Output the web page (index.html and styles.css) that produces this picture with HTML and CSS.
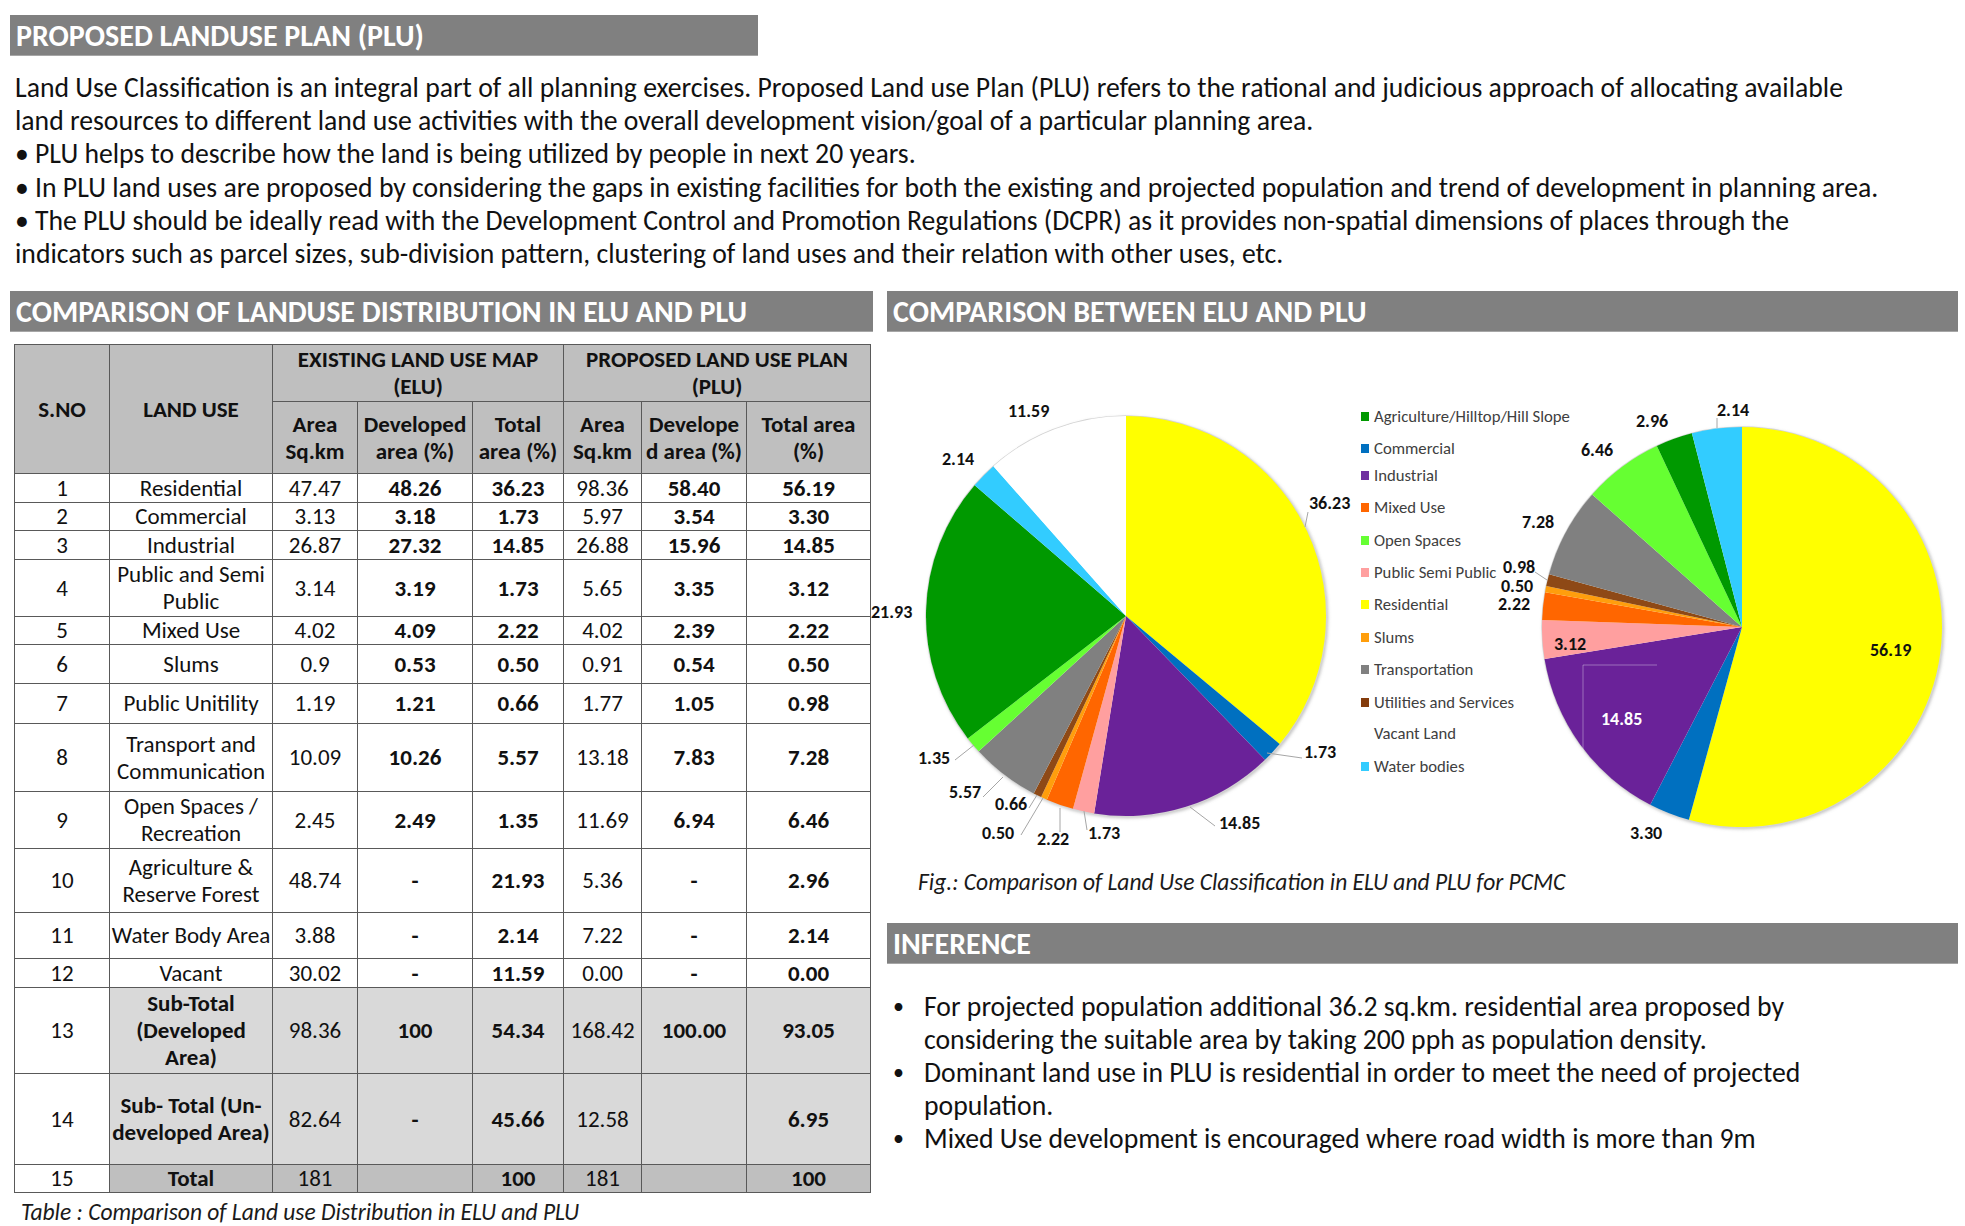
FILE: index.html
```html
<!DOCTYPE html>
<html>
<head>
<meta charset="utf-8">
<title>Proposed Landuse Plan (PLU)</title>
<link rel="stylesheet" href="styles.css">
</head>
<body>
<div class="page">
  <div class="bar bar-top">PROPOSED LANDUSE PLAN (PLU)</div>
  <div class="intro">
    <div class="line">Land Use Classification is an integral part of all planning exercises. Proposed Land use Plan (PLU) refers to the rational and judicious approach of allocating available</div>
    <div class="line">land resources to different land use activities with the overall development vision/goal of a particular planning area.</div>
    <div class="line">• PLU helps to describe how the land is being utilized by people in next 20 years.</div>
    <div class="line">• In PLU land uses are proposed by considering the gaps in existing facilities for both the existing and projected population and trend of development in planning area.</div>
    <div class="line">• The PLU should be ideally read with the Development Control and Promotion Regulations (DCPR) as it provides non-spatial dimensions of places through the</div>
    <div class="line">indicators such as parcel sizes, sub-division pattern, clustering of land uses and their relation with other uses, etc.</div>
  </div>

  <div class="cols">
    <div class="col-left">
      <div class="bar">COMPARISON OF LANDUSE DISTRIBUTION IN ELU AND PLU</div>
      <table class="lu-table">
        <colgroup>
          <col class="c1"><col class="c2"><col class="c3"><col class="c4"><col class="c5"><col class="c6"><col class="c7"><col class="c8">
        </colgroup>
        <thead>
          <tr class="h-top">
            <th rowspan="2">S.NO</th>
            <th rowspan="2">LAND USE</th>
            <th colspan="3">EXISTING LAND USE MAP<br>(ELU)</th>
            <th colspan="3">PROPOSED LAND USE PLAN<br>(PLU)</th>
          </tr>
          <tr class="h-sub">
            <th>Area<br>Sq.km</th>
            <th>Developed<br>area (%)</th>
            <th>Total<br>area (%)</th>
            <th>Area<br>Sq.km</th>
            <th>Develope<br>d area (%)</th>
            <th>Total area<br>(%)</th>
          </tr>
        </thead>
        <tbody>
          <tr class="h29"><td>1</td><td>Residential</td><td>47.47</td><td class="b">48.26</td><td class="b">36.23</td><td>98.36</td><td class="b">58.40</td><td class="b">56.19</td></tr>
          <tr class="h28"><td>2</td><td>Commercial</td><td>3.13</td><td class="b">3.18</td><td class="b">1.73</td><td>5.97</td><td class="b">3.54</td><td class="b">3.30</td></tr>
          <tr class="h29"><td>3</td><td>Industrial</td><td>26.87</td><td class="b">27.32</td><td class="b">14.85</td><td>26.88</td><td class="b">15.96</td><td class="b">14.85</td></tr>
          <tr class="h57"><td>4</td><td>Public and Semi Public</td><td>3.14</td><td class="b">3.19</td><td class="b">1.73</td><td>5.65</td><td class="b">3.35</td><td class="b">3.12</td></tr>
          <tr class="h28"><td>5</td><td>Mixed Use</td><td>4.02</td><td class="b">4.09</td><td class="b">2.22</td><td>4.02</td><td class="b">2.39</td><td class="b">2.22</td></tr>
          <tr class="h39"><td>6</td><td>Slums</td><td>0.9</td><td class="b">0.53</td><td class="b">0.50</td><td>0.91</td><td class="b">0.54</td><td class="b">0.50</td></tr>
          <tr class="h40"><td>7</td><td>Public Unitility</td><td>1.19</td><td class="b">1.21</td><td class="b">0.66</td><td>1.77</td><td class="b">1.05</td><td class="b">0.98</td></tr>
          <tr class="h68"><td>8</td><td>Transport and Communication</td><td>10.09</td><td class="b">10.26</td><td class="b">5.57</td><td>13.18</td><td class="b">7.83</td><td class="b">7.28</td></tr>
          <tr class="h57"><td>9</td><td>Open Spaces / Recreation</td><td>2.45</td><td class="b">2.49</td><td class="b">1.35</td><td>11.69</td><td class="b">6.94</td><td class="b">6.46</td></tr>
          <tr class="h64"><td>10</td><td>Agriculture &amp; Reserve Forest</td><td>48.74</td><td class="b">-</td><td class="b">21.93</td><td>5.36</td><td class="b">-</td><td class="b">2.96</td></tr>
          <tr class="h46"><td>11</td><td>Water Body Area</td><td>3.88</td><td class="b">-</td><td class="b">2.14</td><td>7.22</td><td class="b">-</td><td class="b">2.14</td></tr>
          <tr class="h29"><td>12</td><td>Vacant</td><td>30.02</td><td class="b">-</td><td class="b">11.59</td><td>0.00</td><td class="b">-</td><td class="b">0.00</td></tr>
          <tr class="h86 sub"><td>13</td><td class="b">Sub-Total<br>(Developed<br>Area)</td><td>98.36</td><td class="b">100</td><td class="b">54.34</td><td>168.42</td><td class="b">100.00</td><td class="b">93.05</td></tr>
          <tr class="h91 sub"><td>14</td><td class="b">Sub- Total (Un-<br>developed Area)</td><td>82.64</td><td class="b">-</td><td class="b">45.66</td><td>12.58</td><td></td><td class="b">6.95</td></tr>
          <tr class="h28 tot"><td>15</td><td class="b">Total</td><td>181</td><td></td><td class="b">100</td><td>181</td><td></td><td class="b">100</td></tr>
        </tbody>
      </table>
      <div class="caption table-cap">Table : Comparison of Land use Distribution in ELU and PLU</div>
    </div>

    <div class="col-right">
      <div class="bar">COMPARISON BETWEEN ELU AND PLU</div>
      <svg class="chart" width="1071" height="530" viewBox="887 332 1071 530" xmlns="http://www.w3.org/2000/svg">
        <defs>
          <filter id="sh" x="-10%" y="-10%" width="120%" height="120%">
            <feDropShadow dx="1.5" dy="1.5" stdDeviation="1.5" flood-color="#7f7f7f" flood-opacity="0.45"/>
          </filter>
        </defs>
        <!-- ELU pie -->
        <g filter="url(#sh)">
          <circle cx="1126" cy="616" r="200" fill="#fff" stroke="#d4d4d4" stroke-width="1.5"/>
          <path d="M1126 616 L1126 416 A200 200 0 0 1 1279.67 744.01 Z" fill="#ffff00"/>
          <path d="M1126 616 L1279.67 744.01 A200 200 0 0 1 1265.02 759.79 Z" fill="#0070c0"/>
          <path d="M1126 616 L1265.02 759.79 A200 200 0 0 1 1094.13 813.44 Z" fill="#6b2399"/>
          <path d="M1126 616 L1094.13 813.44 A200 200 0 0 1 1072.99 808.85 Z" fill="#ff9f9f"/>
          <path d="M1126 616 L1072.99 808.85 A200 200 0 0 1 1046.83 799.66 Z" fill="#ff6600"/>
          <path d="M1126 616 L1046.83 799.66 A200 200 0 0 1 1041.13 797.10 Z" fill="#ff9e0c"/>
          <path d="M1126 616 L1041.13 797.10 A200 200 0 0 1 1033.70 793.43 Z" fill="#8e4a12"/>
          <path d="M1126 616 L1033.70 793.43 A200 200 0 0 1 978.73 751.33 Z" fill="#808080"/>
          <path d="M1126 616 L978.73 751.33 A200 200 0 0 1 967.81 738.38 Z" fill="#66ff33"/>
          <path d="M1126 616 L967.81 738.38 A200 200 0 0 1 974.67 485.23 Z" fill="#009900"/>
          <path d="M1126 616 L974.67 485.23 A200 200 0 0 1 993.43 466.25 Z" fill="#33ccff"/>
          <path d="M1126 616 L993.43 466.25 A200 200 0 0 1 1126 416 Z" fill="#ffffff"/>
        </g>
        <!-- PLU pie -->
        <g filter="url(#sh)">
          <circle cx="1742" cy="627" r="200" fill="#fff" stroke="#d4d4d4" stroke-width="1.5"/>
          <path d="M1742 627 L1742 427 A200 200 0 1 1 1688.89 819.82 Z" fill="#ffff00"/>
          <path d="M1742 627 L1688.89 819.82 A200 200 0 0 1 1650.27 804.72 Z" fill="#0070c0"/>
          <path d="M1742 627 L1650.27 804.72 A200 200 0 0 1 1544.57 658.98 Z" fill="#6b2399"/>
          <path d="M1742 627 L1544.57 658.98 A200 200 0 0 1 1542.12 620.02 Z" fill="#ff9f9f"/>
          <path d="M1742 627 L1542.12 620.02 A200 200 0 0 1 1545.04 592.27 Z" fill="#ff6600"/>
          <path d="M1742 627 L1545.04 592.27 A200 200 0 0 1 1546.23 586.10 Z" fill="#ff9e0c"/>
          <path d="M1742 627 L1546.23 586.10 A200 200 0 0 1 1549.09 574.23 Z" fill="#8e4a12"/>
          <path d="M1742 627 L1549.09 574.23 A200 200 0 0 1 1592.21 494.48 Z" fill="#808080"/>
          <path d="M1742 627 L1592.21 494.48 A200 200 0 0 1 1656.84 446.03 Z" fill="#66ff33"/>
          <path d="M1742 627 L1656.84 446.03 A200 200 0 0 1 1691.92 433.37 Z" fill="#009900"/>
          <path d="M1742 627 L1691.92 433.37 A200 200 0 0 1 1742 427 Z" fill="#33ccff"/>
        </g>
        <path d="M1583 783 L1583 665 L1657 665" fill="none" stroke="#ffffff" stroke-opacity="0.35" stroke-width="1"/>

        <!-- leader lines -->
        <g class="leader">
          <path d="M1308 512 L1305 527"/>
          <path d="M1267 753 L1302 758"/>
          <path d="M1190 807 L1215 826"/>
          <path d="M1084 811 L1087 830"/>
          <path d="M1060 808 L1060 832"/>
          <path d="M1043 798 L1021 835"/>
          <path d="M1037 795 L1029 808"/>
          <path d="M1003 777 L983 797"/>
          <path d="M974 745 L955 760"/>
          <path d="M1717 418 L1717 428"/>
          <path d="M1535 572 L1547 580"/>
        </g>

        <!-- ELU labels -->
        <g class="lbl">
          <text x="1008" y="411">11.59</text>
          <text x="942" y="459">2.14</text>
          <text x="1309" y="503">36.23</text>
          <text x="871" y="612">21.93</text>
          <text x="918" y="758">1.35</text>
          <text x="949" y="792">5.57</text>
          <text x="995" y="804">0.66</text>
          <text x="982" y="833">0.50</text>
          <text x="1037" y="839">2.22</text>
          <text x="1088" y="833">1.73</text>
          <text x="1219" y="823">14.85</text>
          <text x="1304" y="752">1.73</text>
        </g>
        <!-- PLU labels -->
        <g class="lbl">
          <text x="1717" y="410">2.14</text>
          <text x="1636" y="421">2.96</text>
          <text x="1581" y="450">6.46</text>
          <text x="1522" y="522">7.28</text>
          <text x="1503" y="567">0.98</text>
          <text x="1501" y="586">0.50</text>
          <text x="1498" y="604">2.22</text>
          <text x="1554" y="644">3.12</text>
          <text x="1601" y="719" class="w">14.85</text>
          <text x="1870" y="650">56.19</text>
          <text x="1630" y="833">3.30</text>
        </g>

        <!-- legend -->
        <g class="legend">
          <rect x="1361" y="412" width="8" height="9" fill="#009900"/><text x="1374" y="416">Agriculture/Hilltop/Hill Slope</text>
          <rect x="1361" y="444" width="8" height="9" fill="#0070c0"/><text x="1374" y="448">Commercial</text>
          <rect x="1361" y="471" width="8" height="9" fill="#7030a0"/><text x="1374" y="475">Industrial</text>
          <rect x="1361" y="503" width="8" height="9" fill="#ff6600"/><text x="1374" y="507">Mixed Use</text>
          <rect x="1361" y="536" width="8" height="9" fill="#66ff33"/><text x="1374" y="540">Open Spaces</text>
          <rect x="1361" y="568" width="8" height="9" fill="#ff9f9f"/><text x="1374" y="572">Public Semi Public</text>
          <rect x="1361" y="600" width="8" height="9" fill="#ffff00"/><text x="1374" y="604">Residential</text>
          <rect x="1361" y="633" width="8" height="9" fill="#ff9e0c"/><text x="1374" y="637">Slums</text>
          <rect x="1361" y="665" width="8" height="9" fill="#808080"/><text x="1374" y="669">Transportation</text>
          <rect x="1361" y="698" width="8" height="9" fill="#843c0c"/><text x="1374" y="702">Utilities and Services</text>
          <text x="1374" y="733">Vacant Land</text>
          <rect x="1361" y="762" width="8" height="9" fill="#33ccff"/><text x="1374" y="766">Water bodies</text>
        </g>
      </svg>
      <div class="caption fig-cap">Fig.: Comparison of Land Use Classification in ELU and PLU for PCMC</div>

      <div class="bar bar-inf">INFERENCE</div>
      <ul class="inference">
        <li>For projected population additional 36.2 sq.km. residential area proposed by considering the suitable area by taking 200 pph as population density.</li>
        <li>Dominant land use in PLU is residential in order to meet the need of projected population.</li>
        <li>Mixed Use development is encouraged where road width is more than 9m</li>
      </ul>
    </div>
  </div>
</div>
</body>
</html>
```
FILE: styles.css
```css
* { box-sizing: border-box; }
body {
  margin: 0;
  background: #ffffff;
  color: #111111;
  font-family: Carlito, "Liberation Sans", Lato, sans-serif;
}
.page {
  width: 1965px;
  padding: 15px 7px 0 10px;
}
.bar {
  height: 41px;
  background: #808080;
  color: #ffffff;
  font-weight: bold;
  font-size: 30px;
  line-height: 41px;
  padding-left: 6px;
  white-space: nowrap;
  border-bottom: 1px solid #a6a6a6;
}
.bar-top { width: 748px; }

.intro {
  margin-top: 15px;
  padding-left: 5px;
  font-size: 27.7px;
  line-height: 33.2px;
}
.intro .line { white-space: nowrap; }

.cols {
  display: flex;
  gap: 14px;
  margin-top: 21px;
  align-items: flex-start;
}
.col-left { width: 863px; flex: 0 0 863px; }
.col-right { width: 1071px; flex: 0 0 1071px; }

/* table */
.lu-table {
  margin: 12px 0 0 4px;
  width: 856px;
  border-collapse: collapse;
  table-layout: fixed;
  font-size: 23px;
  line-height: 27px;
  color: #111;
  border: 1.5px solid #4d4d4d;
}
.c1 { width: 95px; } .c2 { width: 163px; } .c3 { width: 85px; } .c4 { width: 115px; }
.c5 { width: 91px; } .c6 { width: 78px; } .c7 { width: 105px; } .c8 { width: 124px; }
.lu-table th, .lu-table td {
  border: 1px solid #595959;
  text-align: center;
  vertical-align: middle;
  padding: 0 1px;
}
.lu-table th {
  background: #bfbfbf;
  font-weight: bold;
}
.h-top { height: 57px; }
.h-sub { height: 72px; }
.h28 { height: 28px; } .h29 { height: 29px; } .h39 { height: 39px; } .h40 { height: 40px; }
.h46 { height: 46px; } .h57 { height: 57px; } .h64 { height: 64px; } .h68 { height: 68px; }
.h86 { height: 86px; } .h91 { height: 91px; }
.lu-table td.b { font-weight: bold; }
.sub td { background: #d9d9d9; }
.tot td { background: #bfbfbf; }
.sub td:first-child, .tot td:first-child { background: #ffffff; }

.caption {
  font-style: italic;
  font-size: 23.5px;
  line-height: 26px;
  color: #1a1a1a;
  white-space: nowrap;
}
.table-cap { margin-top: 6px; padding-left: 11px; }

/* chart */
.chart { display: block; overflow: visible; }
.chart text { font-family: Carlito, "Liberation Sans", sans-serif; dominant-baseline: central; }
.lbl text { font-size: 18px; font-weight: bold; fill: #111; }
.lbl text.w { fill: #ffffff; }
.legend text { font-size: 16.7px; fill: #404040; }
.leader path { fill: none; stroke: #a6a6a6; stroke-width: 1; }

.fig-cap { margin-top: 7px; padding-left: 31px; }
.bar-inf { margin-top: 28px; }

.inference {
  list-style: none;
  margin: 26px 0 0 0;
  padding: 0 0 0 6px;
  width: 960px;
  font-size: 27.7px;
  line-height: 33px;
}
.inference li { display: flex; }
.inference li::before {
  content: "•";
  flex: 0 0 31px;
  font-size: 22px;
}
```
